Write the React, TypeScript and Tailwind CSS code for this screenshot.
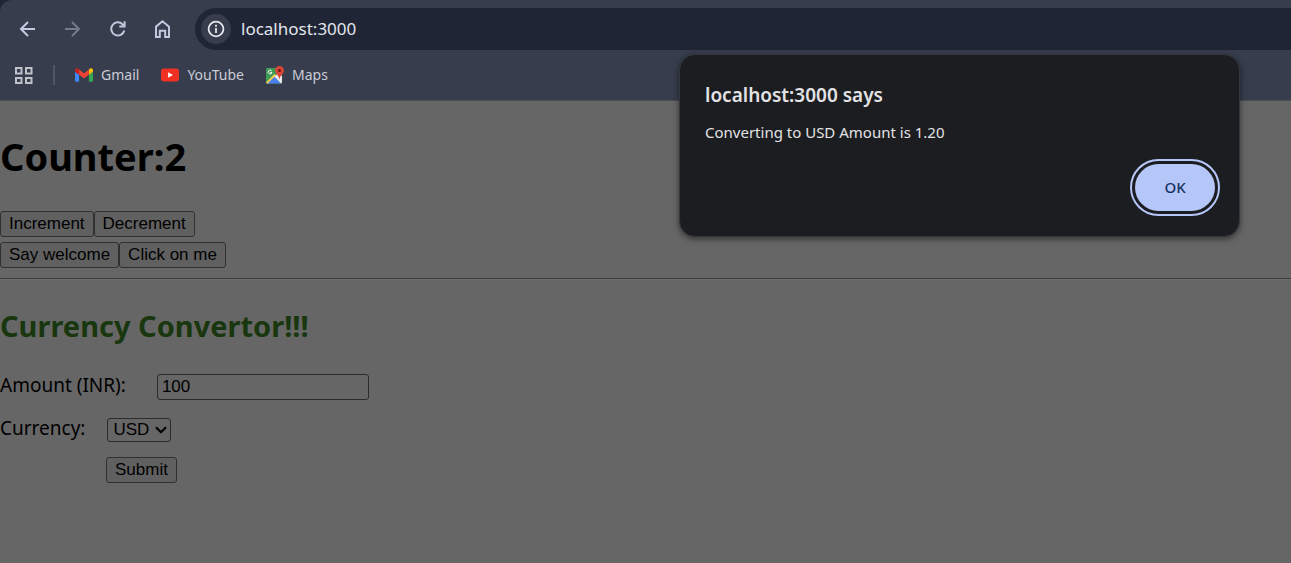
import { useState, type ReactNode } from "react";

function BackIcon() {
  return (
    <svg className="size-4" viewBox="0 0 16 16" fill="none" stroke="currentColor" strokeWidth="2">
      <path d="M15 8H1.500M8 1 1 8l7 7" />
    </svg>
  );
}

function ForwardIcon() {
  return (
    <svg className="size-4" viewBox="0 0 16 16" fill="none" stroke="currentColor" strokeWidth="2">
      <path d="M0 8h13.500M7 1l7 7-7 7" />
    </svg>
  );
}

function ReloadIcon() {
  return (
    <svg className="size-4" viewBox="0 0 16 16" fill="none" stroke="currentColor" strokeWidth="2">
      <path d="M14.300 9.500A6.600 6.600 0 1 1 12.500 3.200L14.200 5" />
      <path d="M14.600 0.300V5.600H9.300" />
    </svg>
  );
}

function HomeIcon() {
  return (
    <svg className="h-[18px] w-4" viewBox="0 0 16 18" fill="none" stroke="currentColor" strokeWidth="2">
      <path d="M1 6.600 7.500 1.300 14 6.600V17h-3.800v-6.200H4.800V17H1z" />
    </svg>
  );
}

function InfoIcon() {
  return (
    <svg className="size-[18px]" viewBox="0 0 18 18" fill="none" stroke="currentColor" strokeWidth="1.8">
      <circle cx="9" cy="9" r="7.4" />
      <path d="M9 8v5M9 4.8v1.9" />
    </svg>
  );
}

function AppsIcon() {
  return (
    <svg className="size-[18px]" viewBox="0 0 18 18" fill="none" stroke="currentColor" strokeWidth="2">
      <path d="M1 2h5.500v5.500H1zM11 2h5.500v5.500H11zM1 12h5.500v5H1zM11 12h5.500v5H11z" />
    </svg>
  );
}

function GmailIcon() {
  return (
    <svg className="h-[14px] w-[18px]" viewBox="52 42 88 66">
      <path fill="#4285f4" d="M58 108h14V74L52 59v43c0 3.32 2.69 6 6 6" />
      <path fill="#34a853" d="M120 108h14c3.32 0 6-2.69 6-6V59l-20 15" />
      <path fill="#fbbc04" d="M120 48v26l20-15v-8c0-7.42-8.47-11.65-14.4-7.2" />
      <path fill="#ea4335" d="M72 74V48l24 18 24-18v26L96 92" />
      <path fill="#c5221f" d="M52 51v8l20 15V48l-5.6-4.2c-5.94-4.45-14.4-.22-14.4 7.2" />
    </svg>
  );
}

function YouTubeIcon() {
  return (
    <svg className="h-[14px] w-[18px]" viewBox="0 0 18 14">
      <rect width="18" height="13" y="0.5" rx="3" fill="#f03022" />
      <path d="M7.1 4.2 12 7l-4.9 2.8z" fill="#fff" />
    </svg>
  );
}

function MapsIcon() {
  return (
    <svg className="size-[18px]" viewBox="0 0 18 18">
      <rect x="0" y="2" width="16" height="15.500" rx="1" fill="#3f9a56" />
      <path d="M0 16.500 8.500 8 11 10.500 3 17.500H1z" fill="#fbd04a" />
      <path d="M1.500 17.500 8.500 10.800l6.500 6.700z" fill="#4a80ee" />
      <path d="M8.500 10.500 12.500 7l3.500 3v6.500l-1 1z" fill="#e9ebee" />
      <path d="M5.600 4.900a1.900 1.900 0 1 0 .3 1.600H4.200" fill="none" stroke="#fff" strokeWidth="1" />
      <path d="M13.500 0a4.400 4.400 0 0 0-4.400 4.400c0 3.400 3.600 4.300 4.400 9 .8-4.700 4.400-5.600 4.400-9A4.400 4.400 0 0 0 13.500 0" fill="#db4437" />
      <circle cx="13.500" cy="4.400" r="1.500" fill="#5f1a15" />
    </svg>
  );
}

function Bookmark({ href, icon, children }: { href: string; icon: ReactNode; children: ReactNode }) {
  return (
    <a href={href} className="flex items-center gap-2 text-sm leading-5 text-[#c9ccd6]">
      {icon}
      {children}
    </a>
  );
}

function PageButton({ children, onClick }: { children: ReactNode; onClick?: () => void }) {
  return (
    <button
      type="button"
      onClick={onClick}
      className="rounded-[3px] border border-[#303030] bg-[#606060] px-2 font-['Liberation_Sans',sans-serif] text-[17px] leading-6 whitespace-nowrap"
    >
      {children}
    </button>
  );
}

function BrowserBar() {
  return (
    <header className="bg-[#1f2535]">
      <div className="rounded-tl-xl border-b border-[#4b4e57] bg-[#373d4d] pt-2">
        <div className="flex items-center">
          <nav aria-label="Navigation" className="flex items-center gap-[29px] pr-6 pl-5 text-[#c2c8de]">
            <button type="button" aria-label="Back"><BackIcon /></button>
            <button type="button" aria-label="Forward" className="text-[#757b8a]"><ForwardIcon /></button>
            <button type="button" aria-label="Reload"><ReloadIcon /></button>
            <button type="button" aria-label="Home"><HomeIcon /></button>
          </nav>
          <div className="flex h-[42px] flex-1 items-center gap-2.5 rounded-l-full bg-[#1f2535] pl-1.5">
            <button
              type="button"
              aria-label="Site information"
              className="flex size-[30px] items-center justify-center rounded-full bg-[#373d4d] text-[#e3e5ec]"
            >
              <InfoIcon />
            </button>
            <input
              aria-label="Address"
              defaultValue="localhost:3000"
              className="min-w-0 flex-1 bg-transparent text-[17px] leading-6 text-[#e3e5ec] outline-none"
            />
          </div>
        </div>
        <nav aria-label="Bookmarks" className="flex h-[50px] items-center gap-[22px] pl-[15px]">
          <div className="flex items-center gap-5">
            <button type="button" aria-label="Apps" className="text-[#c0c2ca]"><AppsIcon /></button>
            <span className="h-5 w-0.5 bg-[#50566a]" />
            <Bookmark href="#gmail" icon={<GmailIcon />}>Gmail</Bookmark>
          </div>
          <Bookmark href="#youtube" icon={<YouTubeIcon />}>YouTube</Bookmark>
          <Bookmark href="#maps" icon={<MapsIcon />}>Maps</Bookmark>
        </nav>
      </div>
    </header>
  );
}

function AlertDialog({ message, onClose }: { message: string; onClose: () => void }) {
  return (
    <div
      role="alertdialog"
      aria-labelledby="alert-title"
      aria-describedby="alert-message"
      className="absolute top-[54px] right-[51px] w-[561px] rounded-2xl border border-[#34373d] bg-[#1c1d20] pt-6 pr-[19px] pb-5 pl-[25px] shadow-[0_2px_6px_rgba(0,0,0,0.5)]"
    >
      <h2 id="alert-title" className="text-[19px] leading-8 font-semibold text-[#e3e3e6]">localhost:3000 says</h2>
      <p id="alert-message" className="mt-2 text-[15px] leading-[26px] text-[#e3e3e6]">{message}</p>
      <div className="mt-3.5 flex justify-end">
        <div className="rounded-full border-2 border-[#b5c6f8] p-[3px]">
          <button
            type="button"
            onClick={onClose}
            className="block h-[47px] w-20 rounded-full bg-[#b5c6f8] text-[15px] font-medium text-[#15325f]"
          >
            OK
          </button>
        </div>
      </div>
    </div>
  );
}

export default function App() {
  const [count, setCount] = useState(2);
  const [open, setOpen] = useState(true);

  return (
    <div className="relative min-h-screen overflow-x-hidden bg-[#666] font-['Noto_Sans',sans-serif] text-black">
      <BrowserBar />
      <main>
        <h1 className="pt-7 text-[38px] leading-[54px] font-bold">Counter:{count}</h1>
        <div className="mt-7 flex">
          <PageButton onClick={() => setCount(count + 1)}>Increment</PageButton>
          <PageButton onClick={() => setCount(count - 1)}>Decrement</PageButton>
        </div>
        <div className="mt-[5px] flex">
          <PageButton>Say welcome</PageButton>
          <PageButton>Click on me</PageButton>
        </div>
        <hr className="mt-2.5 h-0.5 border-t border-b border-t-[#3c3c3c] border-b-[#6c6c6c]" />
        <h2 className="mt-[26px] text-[29px] leading-10 font-bold text-[#19370f]">Currency Convertor!!!</h2>
        <form onSubmit={(event) => event.preventDefault()} className="mt-[27px] text-[19px] leading-6">
          <div className="flex items-baseline gap-[31px]">
            <label htmlFor="amount">Amount (INR):</label>
            <input
              id="amount"
              defaultValue="100"
              className="w-[212px] rounded-[3px] border border-[#2b2b2b] px-1 font-['Liberation_Sans',sans-serif] text-[17px] leading-6"
            />
          </div>
          <div className="mt-4 flex items-baseline gap-[22px]">
            <label htmlFor="currency">Currency:</label>
            <div className="grid items-center">
              <select
                id="currency"
                className="col-start-1 row-start-1 h-6 w-16 appearance-none rounded-[3px] border border-[#2b2b2b] pl-[5px] font-['Liberation_Sans',sans-serif] text-[17px] leading-5"
              >
                <option>USD</option>
                <option>EURO</option>
              </select>
              <svg
                className="pointer-events-none col-start-1 row-start-1 mr-1 h-2 w-3 justify-self-end"
                viewBox="0 0 12 8"
                fill="none"
                stroke="currentColor"
                strokeWidth="2.2"
              >
                <path d="M1 1.200 6 6.200l5-5" />
              </svg>
            </div>
          </div>
          <div className="mt-[15px] flex pl-[106px]">
            <PageButton>Submit</PageButton>
          </div>
        </form>
      </main>
      {open && <AlertDialog message="Converting to USD Amount is 1.20" onClose={() => setOpen(false)} />}
    </div>
  );
}
